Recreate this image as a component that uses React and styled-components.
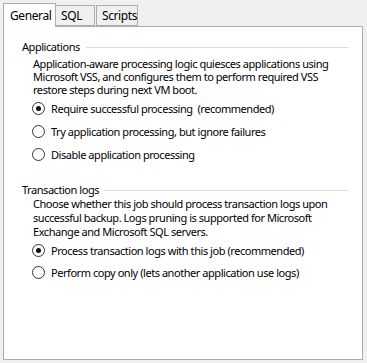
import React from "react";
import styled, { createGlobalStyle } from "styled-components";

const GlobalStyle = createGlobalStyle`
  html, body {
    margin: 0;
    padding: 0;
    background: #f0f0f0;
  }
  body {
    font-family: "Noto Sans", "Open Sans", sans-serif;
    font-size: 11px;
    letter-spacing: -0.45px;
    color: #000;
  }
`;

const Window = styled.div`
  width: 367px;
  height: 363px;
  display: flex;
  flex-direction: column;
  padding: 3px 4px 3px 3px;
  box-sizing: border-box;
`;

const TabStrip = styled.div`
  display: flex;
  align-items: flex-start;
  height: 23px;
  position: relative;
  z-index: 1;
`;

const Tab = styled.div`
  box-sizing: border-box;
  width: ${(p) => p.$w}px;
  height: ${(p) => (p.$active ? "24px" : "21px")};
  margin-top: ${(p) => (p.$active ? "0" : "2px")};
  margin-left: ${(p) => p.$ml || 0}px;
  padding: ${(p) => (p.$active ? "3px 0 0 6px" : "1px 0 0 5px")};
  border: 1px solid #adadad;
  border-left: ${(p) => (p.$noLeft ? "none" : "1px solid #adadad")};
  border-bottom: ${(p) => (p.$active ? "none" : "1px solid #adadad")};
  background: ${(p) => (p.$active ? "#fff" : "#f0f0f0")};
  white-space: nowrap;
  font-size: 12px;
  letter-spacing: -0.4px;
  line-height: 17px;
`;

const Panel = styled.div`
  flex: 1;
  background: #fff;
  border: 1px solid #adadad;
  padding: 12px 13px 0 18px;
  display: flex;
  flex-direction: column;
`;

const Group = styled.section`
  display: flex;
  flex-direction: column;
  margin-top: ${(p) => p.$mt || 0}px;
`;

const GroupHeader = styled.div`
  display: flex;
  align-items: center;
  gap: 6px;
  line-height: 15px;

  &::after {
    content: "";
    flex: 1;
    height: 1px;
    background: #dcdcdc;
    margin-top: 1px;
  }
`;

const Description = styled.p`
  margin: ${(p) => p.$mt}px 0 0 11px;
  line-height: ${(p) => p.$lh}px;
  white-space: nowrap;
`;

const RadioList = styled.div`
  display: flex;
  flex-direction: column;
  gap: ${(p) => p.$gap}px;
  margin: ${(p) => p.$mt}px 0 0 10px;
`;

const RadioRow = styled.label`
  display: flex;
  align-items: center;
  gap: 6px;
  height: 16px;
  white-space: nowrap;
`;

const Circle = styled.span`
  flex: none;
  width: 11px;
  height: 11px;
  border: 1px solid #333;
  border-radius: 50%;
  background: #fff;
  display: flex;
  align-items: center;
  justify-content: center;

  &::after {
    content: "";
    width: 5px;
    height: 5px;
    border-radius: 50%;
    background: #111;
    display: ${(p) => (p.$checked ? "block" : "none")};
  }
`;

function Radio({ checked, children }) {
  return (
    <RadioRow>
      <Circle $checked={checked} />
      <span>{children}</span>
    </RadioRow>
  );
}

export default function App() {
  return (
    <>
      <GlobalStyle />
      <Window>
        <TabStrip>
          <Tab $active $w={53}>General</Tab>
          <Tab $w={39} $noLeft>SQL</Tab>
          <Tab $w={42} $ml={1}>Scripts</Tab>
        </TabStrip>
        <Panel>
          <Group>
            <GroupHeader>Applications</GroupHeader>
            <Description $mt={3} $lh={13}>
              Application-aware processing logic quiesces applications using
              <br />
              Microsoft VSS, and configures them to perform required VSS
              <br />
              restore steps during next VM boot.
            </Description>
            <RadioList $gap={7} $mt={4}>
              <Radio checked>Require successful processing&nbsp; (recommended)</Radio>
              <Radio>Try application processing, but ignore failures</Radio>
              <Radio>Disable application processing</Radio>
            </RadioList>
          </Group>
          <Group $mt={20}>
            <GroupHeader>Transaction logs</GroupHeader>
            <Description $mt={0} $lh={14}>
              Choose whether this job should process transaction logs upon
              <br />
              successful backup. Logs pruning is supported for Microsoft
              <br />
              Exchange and Microsoft SQL servers.
            </Description>
            <RadioList $gap={6} $mt={3}>
              <Radio checked>Process transaction logs with this job (recommended)</Radio>
              <Radio>Perform copy only (lets another application use logs)</Radio>
            </RadioList>
          </Group>
        </Panel>
      </Window>
    </>
  );
}
